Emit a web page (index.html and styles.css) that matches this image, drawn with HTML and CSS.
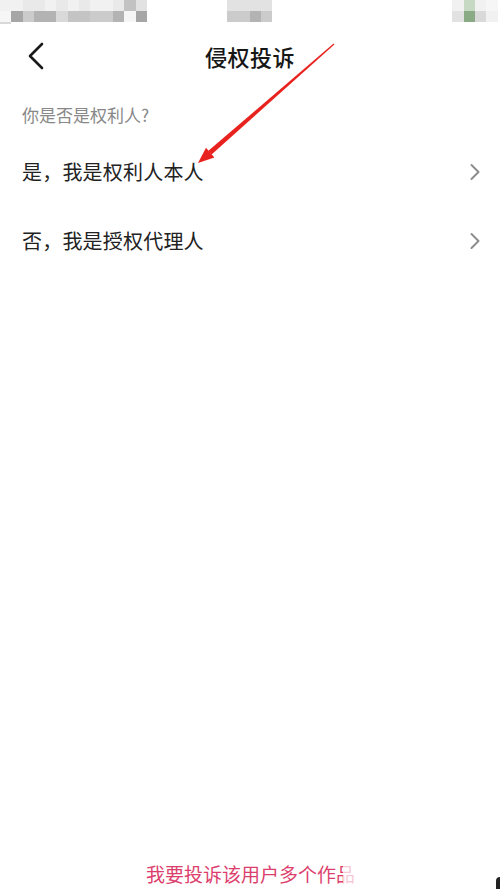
FILE: index.html
```html
<!DOCTYPE html>
<html lang="zh-CN">
<head>
<meta charset="utf-8">
<title>侵权投诉</title>
<link rel="stylesheet" href="styles.css">
</head>
<body>
<div class="page">
  <div class="status">
    <div class="pix pix-left">
      <span class="c1"></span><span class="c1"></span><span class="c2"></span><span class="c2"></span><span class="c1"></span><span class="c2"></span><span class="c1"></span><span class="c2"></span><span class="c1"></span><span class="c1"></span><span class="c2"></span><span class="g5"></span><span class="c3"></span>
      <span class="c0"></span><span class="g1"></span><span class="g3"></span><span class="g2"></span><span class="g2"></span><span class="g4"></span><span class="g25"></span><span class="g25"></span><span class="g3"></span><span class="g3"></span><span class="g2"></span><span class="c0"></span><span class="g1"></span><span class="g4"></span>
    </div>
    <div class="pix pix-mid">
      <span class="c3"></span><span class="c3"></span><span class="c3"></span><span class="c3"></span>
      <span class="g3"></span><span class="g3"></span><span class="g2"></span><span class="g3"></span>
    </div>
    <div class="pix pix-right">
      <span class="c1"></span><span class="gr1"></span><span class="c1"></span><span class="c0"></span>
      <span class="c3"></span><span class="gr2"></span><span class="g4"></span><span class="c1"></span>
    </div>
  </div>

  <header class="nav">
    <div class="nav-back">
      <svg width="18" height="28" viewBox="0 0 18 28"><path d="M15 2 L3 14 L15 26" fill="none" stroke="#1a1a1a" stroke-width="2.6" stroke-linecap="round" stroke-linejoin="round"/></svg>
    </div>
    <h1 class="nav-title">侵权投诉</h1>
    <div class="nav-side"></div>
  </header>

  <p class="question">你是否是权利人?</p>

  <ul class="options">
    <li class="option">
      <span class="option-text">是，我是权利人本人</span>
      <svg class="chev" width="12" height="18" viewBox="0 0 12 18"><path d="M2.5 2 L9.5 9 L2.5 16" fill="none" stroke="#8c8c8c" stroke-width="2" stroke-linecap="round" stroke-linejoin="round"/></svg>
    </li>
    <li class="option">
      <span class="option-text">否，我是授权代理人</span>
      <svg class="chev" width="12" height="18" viewBox="0 0 12 18"><path d="M2.5 2 L9.5 9 L2.5 16" fill="none" stroke="#8c8c8c" stroke-width="2" stroke-linecap="round" stroke-linejoin="round"/></svg>
    </li>
  </ul>

  <footer class="footer">
    <span class="footer-link">我要投诉该用户多个作品</span>
  </footer>

  <div class="watermark"></div>
  <div class="corner"></div>

  <svg class="annot" width="500" height="889" viewBox="0 0 500 889">
    <polygon points="334.4,44.5 333.6,43.5 208.4,150.8 211.6,154.4" fill="#e8231f"/>
    <polygon points="198,163 206,147.8 214.4,157.4" fill="#e8231f"/>
  </svg>
</div>
</body>
</html>
```

FILE: styles.css
```css
* { box-sizing: border-box; }
html, body { margin: 0; padding: 0; background: #fff; }
body {
  font-family: "Noto Sans CJK SC", "Noto Sans", "Liberation Sans", sans-serif;
  width: 500px;
  height: 889px;
  overflow: hidden;
}
.page {
  position: relative;
  width: 500px;
  height: 889px;
  display: flex;
  flex-direction: column;
}

/* pixelated status bar */
.status {
  height: 24px;
  position: relative;
  display: flex;
}
.pix { display: grid; grid-template-rows: 11px 11px; grid-auto-flow: row; }
.pix span { display: block; }
.pix-left { grid-template-columns: repeat(13, 11.3px); margin-left: 0; }
.pix-mid { grid-template-columns: repeat(4, 11.4px); margin-left: 80px; }
.pix-right { grid-template-columns: repeat(4, 11.3px); margin-left: 180px; }
.c0 { background: #f6f6f6; }
.c1 { background: #f1f1f1; }
.c2 { background: #e9e9e9; }
.c3 { background: #e2e2e2; }
.g1 { background: #a6a6a6; }
.g2 { background: #b3b3b3; }
.g25 { background: #c4c4c4; }
.g3 { background: #cbcbcb; }
.g4 { background: #d9d9d9; }
.g5 { background: #c2c2c2; }
.gr1 { background: #c6d9c2; }
.gr2 { background: #8aaa85; }

/* navigation */
.nav {
  height: 64px;
  display: grid;
  grid-template-columns: 1fr auto 1fr;
  align-items: center;
}
.nav-back { padding-left: 27px; display: flex; align-items: center; }
.nav-title {
  margin: 0;
  font-size: 22px;
  font-weight: 500;
  color: #161616;
  letter-spacing: 0.5px;
  line-height: 30px;
}

.question {
  margin: 15px 0 0 22px;
  font-size: 17px;
  line-height: 23px;
  color: #888;
}

.options {
  list-style: none;
  margin: 11px 0 0;
  padding: 0;
}
.option {
  height: 69px;
  display: flex;
  align-items: center;
  justify-content: space-between;
  padding: 0 19px 0 22px;
}
.option-text {
  font-size: 20px;
  color: #222;
  line-height: 28px;
  letter-spacing: 0.2px;
}
.chev { display: block; }

.footer {
  margin-top: auto;
  padding-bottom: 2px;
  text-align: center;
}
.footer-link {
  font-size: 19px;
  line-height: 22px;
  color: #dc3f6e;
  padding-left: 1px;
}

.watermark {
  position: absolute;
  left: 343px;
  top: 822px;
  width: 152px;
  height: 67px;
  background: rgba(255, 255, 255, 0.72);
  border-radius: 6px;
}
.corner {
  position: absolute;
  right: 0;
  bottom: 0;
  width: 4px;
  height: 12px;
  background: #222;
  border-top-left-radius: 4px;
}
.annot {
  position: absolute;
  left: 0;
  top: 0;
  pointer-events: none;
}
```
